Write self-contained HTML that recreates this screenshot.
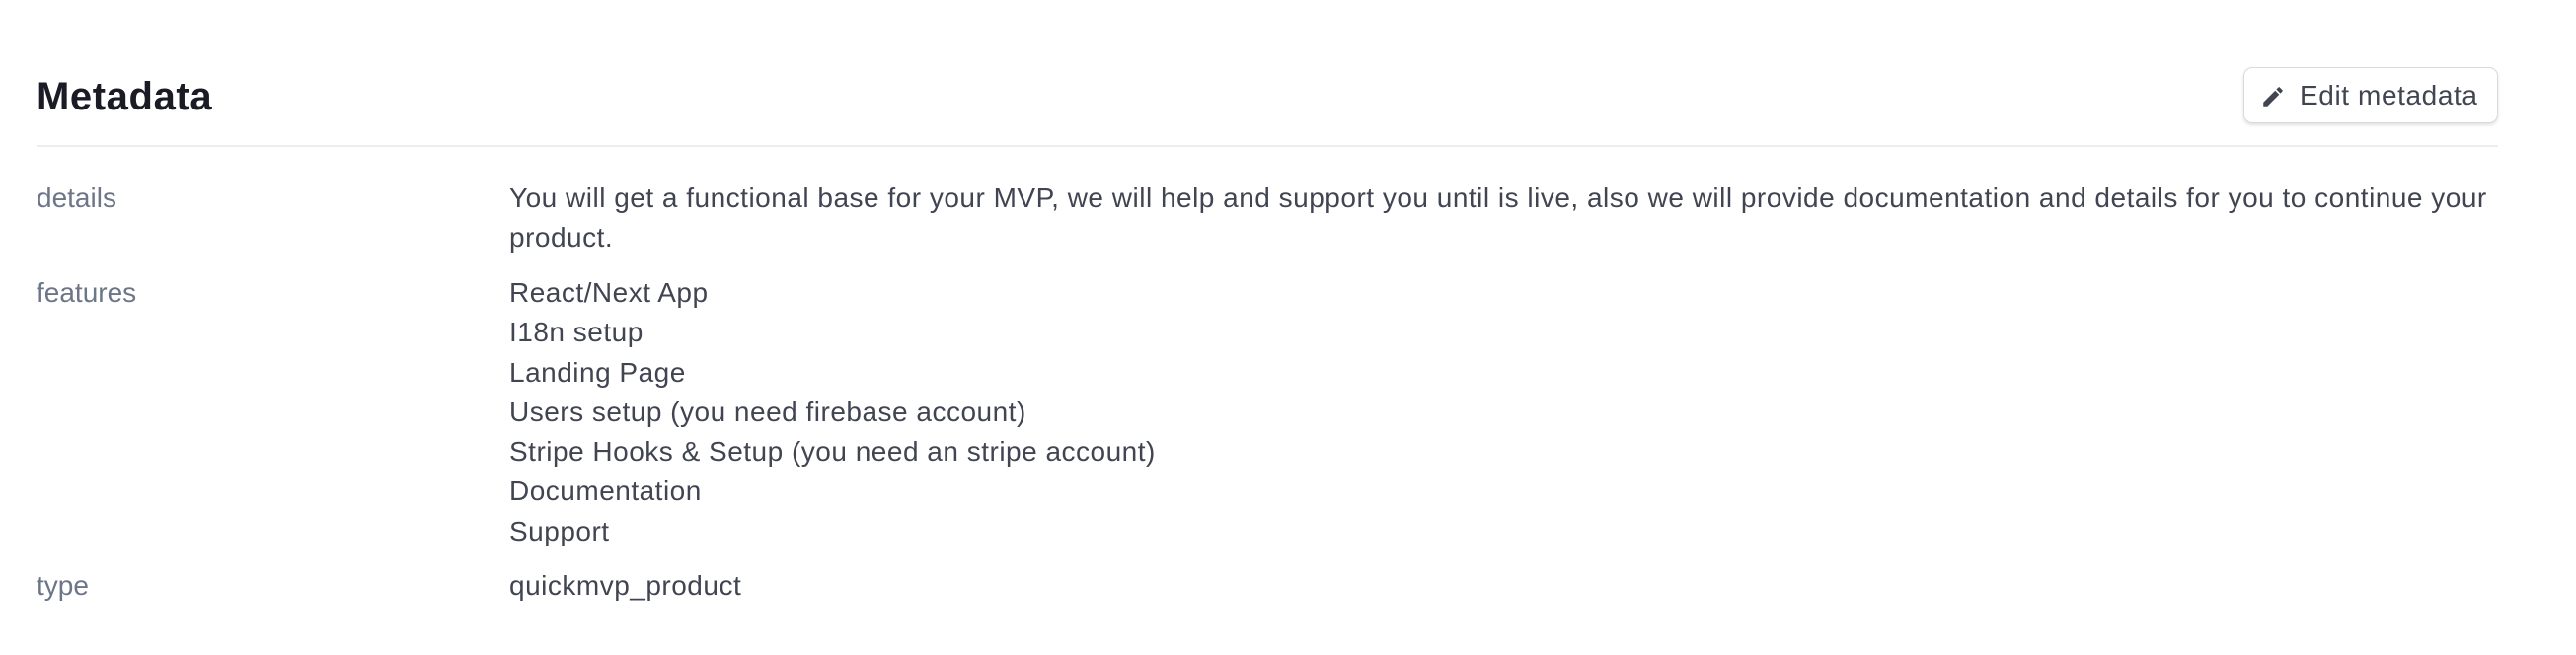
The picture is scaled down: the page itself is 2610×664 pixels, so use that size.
<!DOCTYPE html>
<html><head><meta charset="utf-8"><style>
html,body{margin:0;padding:0;background:#fff;width:2610px;height:664px;overflow:hidden;font-family:"Liberation Sans",sans-serif;}
h1{position:absolute;left:37px;top:75px;margin:0;font-size:40px;font-weight:bold;color:#1a1b25;line-height:46px;letter-spacing:0.6px;}
.sep{position:absolute;left:37px;top:147px;width:2494px;height:2px;background:#ebeef1;}
.btn{position:absolute;left:2273px;top:68px;width:256px;height:55px;border:1px solid #d5dbe1;border-radius:9px;box-shadow:0 2px 3px rgba(0,0,0,.12);background:#fff;}
.btn span{position:absolute;left:56px;top:12px;font-size:28px;color:#414552;line-height:32px;letter-spacing:0.6px;}
.btn svg{position:absolute;left:16px;top:16px;}
.lab{position:absolute;left:37px;font-size:28px;line-height:40px;color:#6c7688;}
.val{position:absolute;left:516px;font-size:28px;line-height:40.3px;color:#414552;white-space:nowrap;letter-spacing:0.5px;}
</style></head><body>
<h1>Metadata</h1>
<div class="btn"><svg width="26" height="26" viewBox="0 0 24 24"><path fill="#414552" d="M3 17.25V21h3.75L17.81 9.94l-3.75-3.75L3 17.25zM20.71 7.04a1 1 0 0 0 0-1.41l-2.34-2.34a1 1 0 0 0-1.41 0l-1.83 1.83 3.75 3.75 1.83-1.83z"/></svg><span>Edit metadata</span></div>
<div class="sep"></div>
<div class="lab" style="top:181px">details</div>
<div class="val" style="top:181px">You will get a functional base for your MVP, we will help and support you until is live, also we will provide documentation and details for you to continue your<br>product.</div>
<div class="lab" style="top:277px">features</div>
<div class="val" style="top:277px">React/Next App<br>I18n setup<br>Landing Page<br>Users setup (you need firebase account)<br>Stripe Hooks &amp; Setup (you need an stripe account)<br>Documentation<br>Support</div>
<div class="lab" style="top:574px">type</div>
<div class="val" style="top:574px">quickmvp_product</div>
</body></html>
